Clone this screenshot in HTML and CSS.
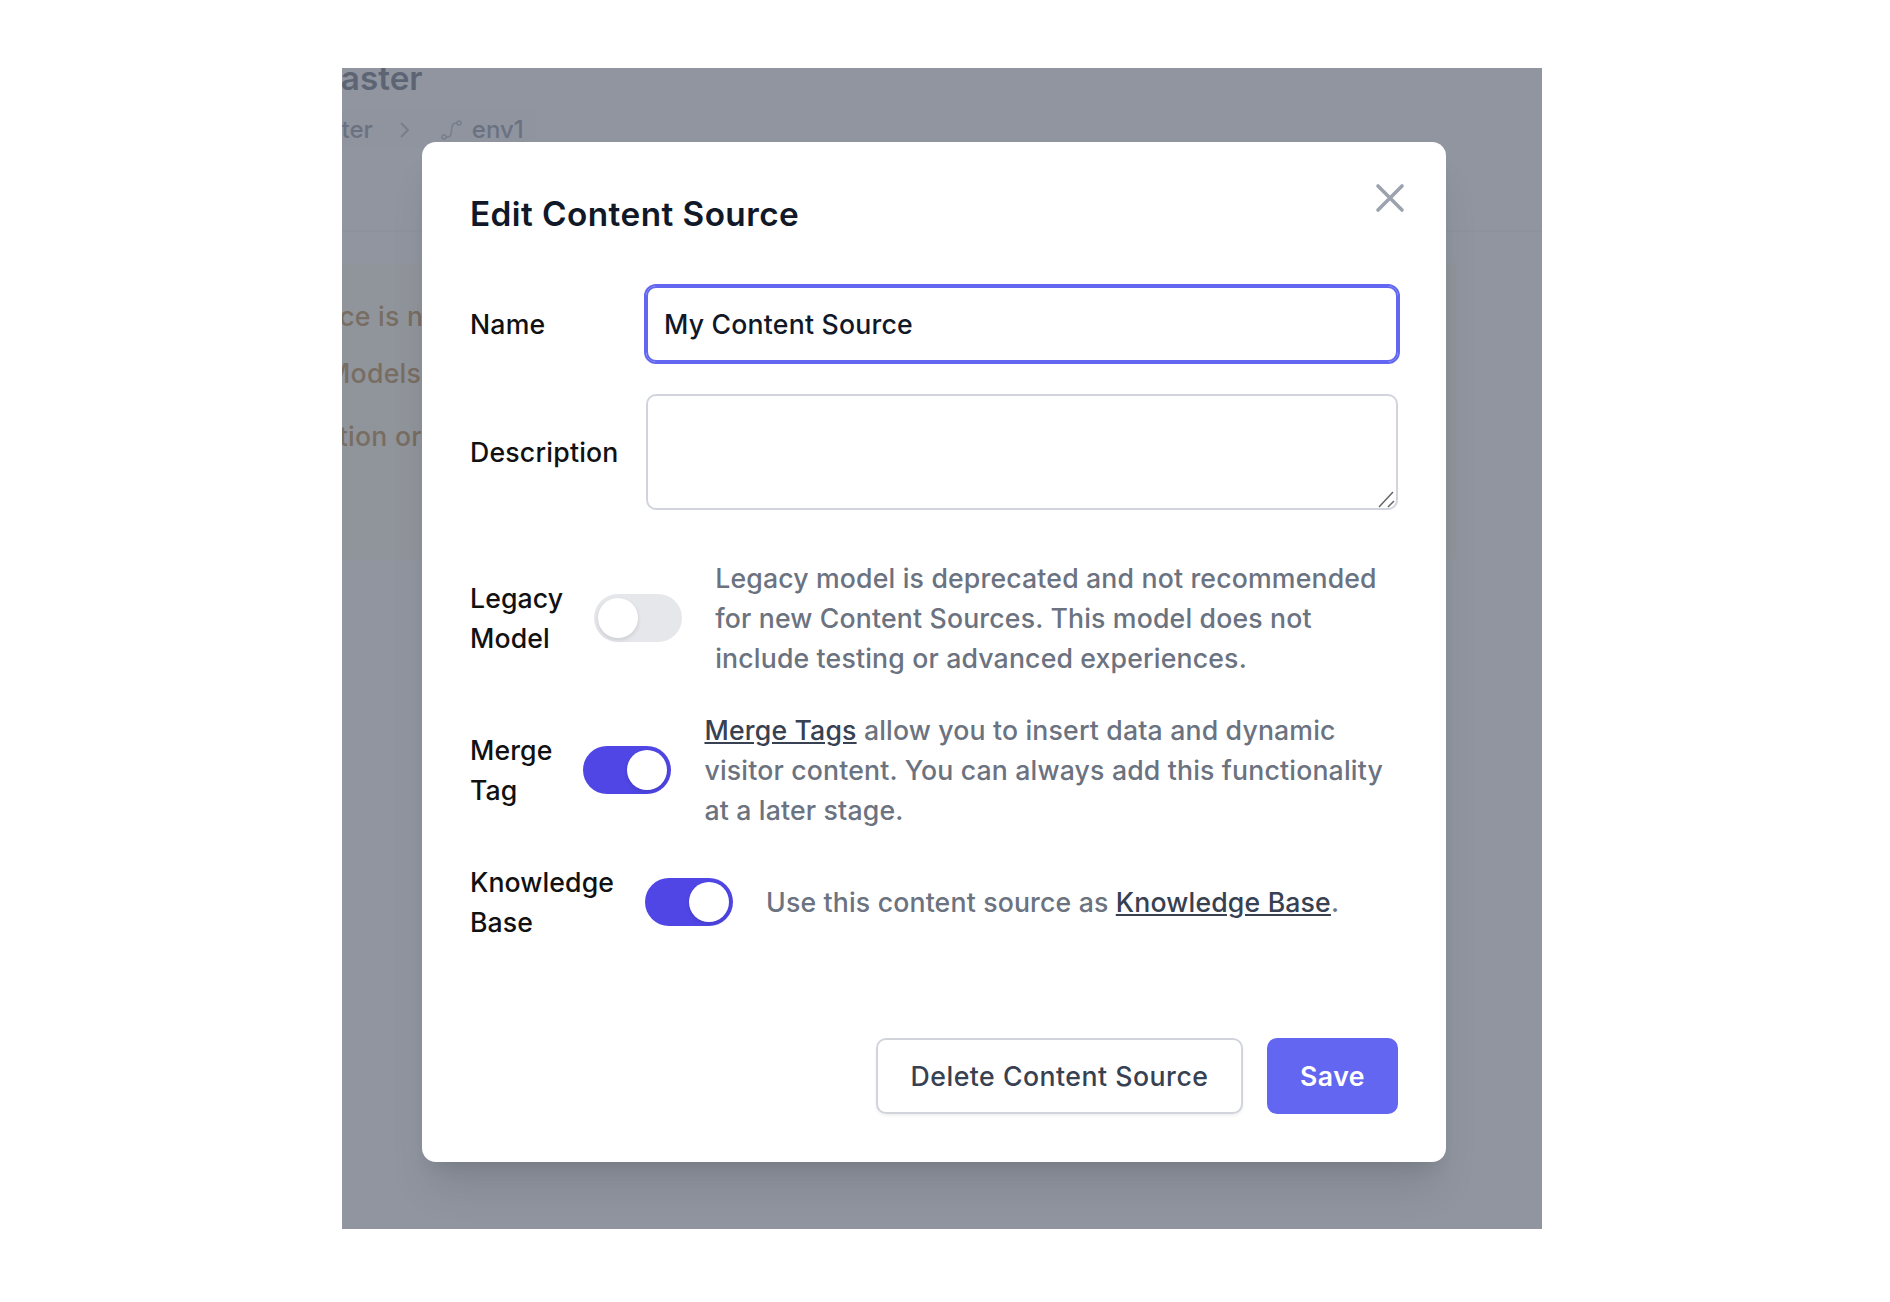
FILE: index.html
```html
<!DOCTYPE html>
<html lang="en">
<head>
<meta charset="utf-8">
<title>Edit Content Source</title>
<link rel="stylesheet" href="styles.css">
</head>
<body>
<div class="frame">
  <div class="page">
    <h1 class="page-title">Master</h1>
    <nav class="crumbs">
      <span class="crumb-first">Master</span>
      <svg class="crumb-sep" viewBox="0 0 12 18" aria-hidden="true"><path d="M2 2l7 7-7 7"/></svg>
      <svg class="crumb-icon" viewBox="0 0 21 20" aria-hidden="true"><circle cx="3" cy="17" r="2"/><circle cx="18" cy="3" r="2"/><path d="M5 17c5 0 5-1 5.500-7S12 3 16 3"/></svg>
      <span>env1</span>
    </nav>
    <div class="divider"></div>
    <section class="notice">
      <p class="notice-a">This source is not</p>
      <p class="notice-b">Models</p>
      <p class="notice-c">Configuration or</p>
    </section>
  </div>
  <div class="overlay">
    <div class="modal">
      <button class="close" type="button" aria-label="Close">
        <svg viewBox="0 0 24 24" aria-hidden="true"><path d="M6 18L18 6M6 6l12 12"/></svg>
      </button>
      <h2 class="modal-title">Edit Content Source</h2>
      <div class="field field-name">
        <label class="field-label" for="name">Name</label>
        <input class="text-input" id="name" type="text" value="My Content Source">
      </div>
      <div class="field field-desc">
        <label class="field-label" for="desc">Description</label>
        <div class="area-wrap">
          <textarea class="text-area" id="desc"></textarea>
          <svg class="grip" viewBox="0 0 20 20" aria-hidden="true"><path d="M3 19L17 4M12 19l6-6"/></svg>
        </div>
      </div>
      <div class="toggle-row row-legacy">
        <span class="toggle-label">Legacy<br>Model</span>
        <span class="toggle"><span class="knob"></span></span>
        <p class="toggle-help">Legacy model is deprecated and not recommended for new Content Sources. This model does not include testing or advanced experiences.</p>
      </div>
      <div class="toggle-row row-merge">
        <span class="toggle-label">Merge<br>Tag</span>
        <span class="toggle on"><span class="knob"></span></span>
        <p class="toggle-help"><a href="#">Merge Tags</a> allow you to insert data and dynamic visitor content. You can always add this functionality at a later stage.</p>
      </div>
      <div class="toggle-row row-kb">
        <span class="toggle-label">Knowledge<br>Base</span>
        <span class="toggle on"><span class="knob"></span></span>
        <p class="toggle-help">Use this content source as <a href="#">Knowledge Base</a>.</p>
      </div>
      <div class="actions">
        <button class="btn btn-outline" type="button">Delete Content Source</button>
        <button class="btn btn-primary" type="button">Save</button>
      </div>
    </div>
  </div>
</div>
</body>
</html>
```
FILE: styles.css
```css
* { box-sizing: border-box; }
html, body { margin: 0; background: #fff; }
body {
  height: 1302px;
  padding: 68px 0 0 342px;
  overflow: hidden;
  font-family: Inter, "Liberation Sans", sans-serif;
  font-size: 26.67px;
  line-height: 40px;
  font-weight: 450;
  letter-spacing: .25px;
  color: #111827;
}
p, h1, h2 { margin: 0; }

.frame {
  position: relative;
  width: 1200px;
  height: 1161px;
  overflow: hidden;
  background: #fff;
}

/* faded page behind the dialog */
.page-title {
  margin: -10px 0 0 -32px;
  font-size: 33.33px;
  line-height: 40px;
  font-weight: 600;
  letter-spacing: 0;
  color: #374151;
  white-space: nowrap;
}
.crumbs {
  display: flex;
  align-items: center;
  width: 194px;
  height: 38px;
  margin-top: 12px;
  padding-top: 2px;
  background: #f9fafb;
  font-size: 24px;
  line-height: 36px;
  letter-spacing: 0;
  color: #6b7280;
  white-space: nowrap;
}
.crumb-first { margin-left: -49px; }
.crumb-sep {
  width: 12px;
  height: 18px;
  margin-left: 26px;
  fill: none;
  stroke: #9ca3af;
  stroke-width: 2;
}
.crumb-icon {
  width: 21px;
  height: 20px;
  margin-left: 30px;
  fill: none;
  stroke: #9ca3af;
  stroke-width: 1.500;
}
.crumb-icon + span { margin-left: 10px; }
.divider {
  height: 2px;
  margin-top: 82px;
  background: #f3f4f6;
}
.notice {
  width: 1114px;
  height: 296px;
  margin-top: 31px;
  padding-top: 33px;
  background: #fffbeb;
  color: #a16207;
  font-weight: 500;
  white-space: nowrap;
}
.notice-a { margin-left: -123px; }
.notice-b { margin-left: -16px; margin-top: 17px; }
.notice-c { margin-left: -132px; margin-top: 23px; }

/* dialog */
.overlay {
  position: absolute;
  inset: 0;
  padding: 74px 0 0 80px;
  background: rgba(107, 114, 128, .75);
}
.modal {
  position: relative;
  width: 1024px;
  height: 1020px;
  padding: 48px;
  background: #fff;
  border-radius: 14px;
  box-shadow: 0 33px 42px -8px rgba(0, 0, 0, .1), 0 13px 17px -10px rgba(0, 0, 0, .1);
}
.close {
  position: absolute;
  top: 32px;
  right: 32px;
  width: 48px;
  height: 48px;
  padding: 0;
  border: 0;
  background: none;
}
.close svg {
  display: block;
  width: 48px;
  height: 48px;
  fill: none;
  stroke: #9ca3af;
  stroke-width: 1.800;
  stroke-linecap: round;
}
.modal-title {
  padding-top: 1px;
  font-size: 33.33px;
  line-height: 47px;
  font-weight: 600;
  letter-spacing: .44px;
  color: #111827;
}
.field {
  display: grid;
  grid-template-columns: 176px 752px;
  align-items: center;
}
.field-name { margin-top: 48px; }
.field-desc { margin-top: 32px; }
.field-label { color: #111; letter-spacing: .2px; }
.text-input, .text-area {
  display: block;
  width: 752px;
  font: inherit;
  letter-spacing: .2px;
  color: #111827;
  background: #fff;
  border: 2px solid #d1d5db;
  border-radius: 10px;
  padding: 0 17px;
}
.text-input {
  height: 76px;
  padding-left: 16px;
  border-color: #6366f1;
  outline: 2px solid #6366f1;
  outline-offset: 0;
}
.area-wrap { position: relative; }
.text-area {
  height: 116px;
  resize: none;
}
.grip {
  position: absolute;
  right: 2px;
  bottom: 2px;
  width: 20px;
  height: 20px;
  fill: none;
  stroke: #666;
  stroke-width: 1.500;
}

.toggle-row {
  display: flex;
  align-items: center;
  gap: 33px;
}
.row-legacy { margin-top: 48px; }
.row-merge { margin-top: 32px; }
.row-kb { margin-top: 32px; }
.toggle-label { flex: none; margin-right: -2px; color: #111; letter-spacing: .1px; }
.toggle {
  flex: none;
  width: 88px;
  height: 48px;
  padding: 4px;
  display: flex;
  justify-content: flex-start;
  border-radius: 24px;
  background: #e5e7eb;
}
.toggle.on {
  justify-content: flex-end;
  background: #4f46e5;
}
.knob {
  width: 40px;
  height: 40px;
  border-radius: 50%;
  background: #fff;
  box-shadow: 0 2px 4px rgba(0, 0, 0, .12);
}
.toggle-help {
  flex: 1;
  min-width: 0;
  letter-spacing: .16px;
  color: #6b7280;
}
.toggle-help a { color: #374151; text-decoration: underline; }

.actions {
  position: absolute;
  right: 48px;
  bottom: 48px;
  display: flex;
  gap: 24px;
}
.btn {
  height: 76px;
  padding: 0;
  font: inherit;
  font-weight: 500;
  letter-spacing: .5px;
  border-radius: 10px;
}
.btn-outline {
  width: 367px;
  color: #374151;
  background: #fff;
  border: 2px solid #d1d5db;
  box-shadow: 0 2px 3px rgba(0, 0, 0, .06);
}
.btn-primary {
  width: 131px;
  font-weight: 600;
  color: #fff;
  background: #6366f1;
  border: 0;
}
```
